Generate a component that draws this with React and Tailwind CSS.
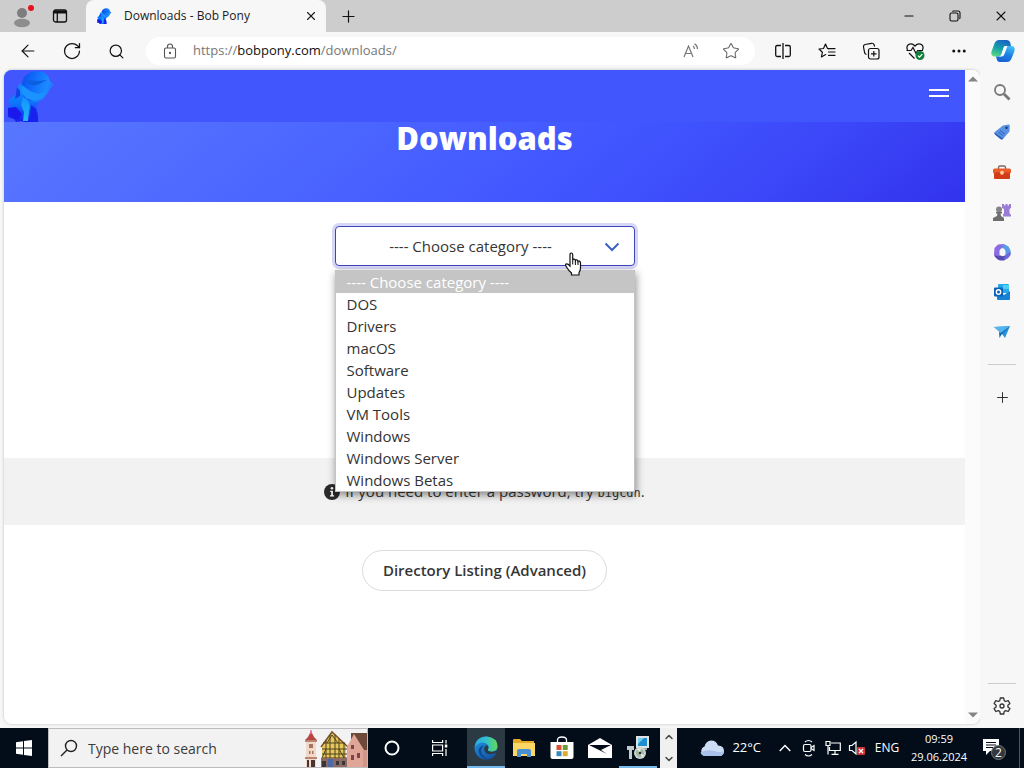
import React from "react";
import {
  ArrowLeft,
  RotateCw,
  Search,
  Star,
  X,
  Plus,
  Minus,
  ChevronDown,
  ChevronUp,
  Ellipsis,
} from "lucide-react";

const categories = [
  "DOS",
  "Drivers",
  "macOS",
  "Software",
  "Updates",
  "VM Tools",
  "Windows",
  "Windows Server",
  "Windows Betas",
];

const iconButton = "flex h-full items-center justify-center";

function DinoLogo({ className, id }) {
  return (
    <svg viewBox="0 0 52 52" className={className} aria-hidden="true">
      <defs>
        <linearGradient id={`${id}-head`} x1="0" y1="0.2" x2="1" y2="0.5">
          <stop offset="0" stopColor="#0a50f0" />
          <stop offset="0.45" stopColor="#1273fb" />
          <stop offset="0.8" stopColor="#1b8cff" />
          <stop offset="1" stopColor="#2b6cff" />
        </linearGradient>
        <linearGradient id={`${id}-body`} x1="0.4" y1="0" x2="0.5" y2="1">
          <stop offset="0" stopColor="#148cff" />
          <stop offset="0.5" stopColor="#0c76fb" />
          <stop offset="0.75" stopColor="#0f4cf6" />
          <stop offset="1" stopColor="#1a18ef" />
        </linearGradient>
        <linearGradient id={`${id}-leg`} x1="0" y1="0" x2="0" y2="1">
          <stop offset="0" stopColor="#1391ff" />
          <stop offset="1" stopColor="#24b8f2" />
        </linearGradient>
      </defs>
      <path
        d="M16 13l2 4 4-3 14 12-2 6-2 4 2 8v8H21l-4-1-5 1-2-3-7-2 4-4-4-5 4-3-3-5 6-4 3-5 1-4z"
        fill={`url(#${id}-body)`}
      />
      <path
        d="M18 13l2-6 5-4 6-2 8 1 5 4 2 5 4 4-4 4-3 5-4 5-6 3-7 1-6-5z"
        fill={`url(#${id}-head)`}
      />
      <path d="M18 15l-1 7 5 6 9 3 7-3 4-6-8 2-8-3z" fill="#1a92ff" />
      <path d="M21 10c3 5 8 7 14 4l8-4-10 1z" fill="#0b5fe0" />
      <path d="M19 27c6 3 8 8 6 14l-1 10h-5l1-9-3-7z" fill={`url(#${id}-leg)`} />
      <path d="M13 17l3 4v5l-5 3z" fill="#1440e6" />
      <path d="M4 38l8-1 6 7-4 6-4-1-6-3z" fill="#1b18ee" />
      <path d="M27 35l5 4 2 13h-8z" fill="#1a20f0" />
    </svg>
  );
}

function TitleBar() {
  return (
    <header className="flex h-8 items-stretch bg-[#cdcdcd]">
      <button aria-label="Profile" className="flex w-11 items-center justify-center">
        <svg viewBox="0 0 24 24" className="h-6 w-6">
          <circle cx="12" cy="9" r="5" fill="#7d7d7d" />
          <ellipse cx="12" cy="19" rx="8" ry="4.2" fill="#8d8d8d" />
          <circle cx="21" cy="4" r="3" fill="#e3121c" />
        </svg>
      </button>
      <button aria-label="Tab actions" className="flex w-8 items-center justify-center">
        <svg viewBox="0 0 16 16" className="h-4 w-4" fill="none" stroke="#111" strokeWidth="1.3">
          <rect x="1.5" y="2" width="13" height="12" rx="2" />
          <path d="M2 4h12" strokeWidth="3" />
          <path d="M5.3 5v9" />
        </svg>
      </button>
      <div className="ml-[10px] flex w-60 items-center rounded-t-lg bg-[#f7f7f7] px-2">
        <DinoLogo id="tab" className="h-4 w-5" />
        <span className="ml-[10px] flex-1 text-[12px] text-[#1b1b1b]">Downloads - Bob Pony</span>
        <button aria-label="Close tab">
          <X size={14} color="#222" strokeWidth={2} />
        </button>
      </div>
      <button aria-label="New tab" className="flex w-11 items-center justify-center">
        <Plus size={19} color="#111" strokeWidth={1.5} />
      </button>
      <div className="flex-1" />
      <button aria-label="Minimize" className="flex w-[46px] items-center justify-center">
        <Minus size={14} color="#111" strokeWidth={1.8} />
      </button>
      <button aria-label="Restore" className="flex w-[46px] items-center justify-center">
        <svg viewBox="0 0 12 12" className="h-3 w-3" fill="none" stroke="#111" strokeWidth="1.1">
          <rect x="1" y="3" width="8" height="8" rx="1.5" />
          <path d="M3.2 1.5Q3.5 1 4.5 1H9a2 2 0 0 1 2 2v4.500q0 1-.7 1.300" />
        </svg>
      </button>
      <button aria-label="Close" className="flex w-[46px] items-center justify-center">
        <X size={16} color="#111" strokeWidth={1.6} />
      </button>
    </header>
  );
}

function CopilotIcon() {
  return (
    <svg viewBox="0 0 24 24" className="h-6 w-6">
      <defs>
        <linearGradient id="cpA" x1="0.6" y1="0" x2="0.2" y2="1">
          <stop offset="0" stopColor="#1a63c4" />
          <stop offset="0.5" stopColor="#14a0a8" />
          <stop offset="1" stopColor="#5fd884" />
        </linearGradient>
        <linearGradient id="cpB" x1="0.7" y1="0" x2="0.3" y2="1">
          <stop offset="0" stopColor="#45bdf5" />
          <stop offset="0.5" stopColor="#1c80e4" />
          <stop offset="1" stopColor="#1660d2" />
        </linearGradient>
      </defs>
      <path d="M8 1h8q2.500 0 3.200 2.500L20 7h-5q-2 0-2.600 2l-2 6.500q-.7 2-2.700 2H3.500Q-.5 17 .5 12.500L3.500 4.500Q4.800 1 8 1z" fill="url(#cpA)" />
      <path d="M16 23H9q-2.500 0-3.200-2.500L5 17.500h4q2 0 2.600-2l2-6.500q.7-2 2.700-2h4.200q4 .5 3 5L20.500 19.500Q19.200 23 16 23z" fill="url(#cpB)" />
      <path d="M13.800 7h2.700L13.500 15q-.8 2.500-3 2.500H8q2-.2 2.600-2.200l1.700-5.800q.5-2 1.500-2.500z" fill="#f4fbff" />
    </svg>
  );
}

function Toolbar() {
  return (
    <nav className="flex h-[38px] items-center bg-[#f7f7f7] pl-[6px]">
      <button aria-label="Back" className={`${iconButton} w-11`}>
        <ArrowLeft size={20} color="#111" strokeWidth={1.4} />
      </button>
      <button aria-label="Refresh" className={`${iconButton} w-11`}>
        <RotateCw size={20} color="#111" strokeWidth={1.5} />
      </button>
      <button aria-label="Search" className={`${iconButton} w-11`}>
        <Search size={17} color="#111" strokeWidth={1.7} />
      </button>
      <div className="ml-2 mr-[6px] flex h-7 flex-1 items-center rounded-full bg-white pl-[17px] pr-[15px]">
        <svg viewBox="0 0 14 16" className="h-4 w-[14px]" fill="none" stroke="#555" strokeWidth="1.1">
          <rect x="1.500" y="5" width="11" height="10" rx="1.500" />
          <path d="M4.500 5V3.500a2.500 2.500 0 0 1 5 0V5" />
          <circle cx="7" cy="10" r=".6" fill="#555" />
        </svg>
        <div className="ml-4 flex-1 text-[13px] text-[#777]">
          https://<span className="text-[#111]">bobpony.com</span>/downloads/
        </div>
        <button aria-label="Read aloud" className="w-10">
          <svg viewBox="0 0 18 18" className="h-[18px] w-[18px]" fill="none" stroke="#777" strokeWidth="1.200">
            <path d="M2 15 6.500 4 11 15M3.500 11.500h6M11 4q1.500 1 1.500 3M12.500 1.800Q15.500 3.500 15.500 7" />
          </svg>
        </button>
        <button aria-label="Favorite this page">
          <Star size={18} color="#666" strokeWidth={1.4} />
        </button>
      </div>
      <button aria-label="Split screen" className={`${iconButton} w-11`}>
        <svg viewBox="0 0 18 18" className="h-[18px] w-[18px]" fill="none" stroke="#111" strokeWidth="1.300">
          <path d="M9 1v16M7 3.500H3.200Q1.700 3.500 1.700 5v8q0 1.500 1.500 1.500H7M11 3.500h3.800q1.500 0 1.500 1.500v8q0 1.500-1.500 1.500H11" />
        </svg>
      </button>
      <button aria-label="Favorites" className={`${iconButton} w-11`}>
        <svg viewBox="0 0 18 18" className="h-[18px] w-[18px]" fill="none" stroke="#111" strokeWidth="1.200" strokeLinejoin="round" strokeLinecap="round">
          <path d="M10.500 7 12 6.500H9.500L7.500 2 5.500 6.500 1 7l3.400 3.200L3.400 15l4.300-2.400M11.500 6.700H17M10.500 10H17M10.500 13.300H17" />
        </svg>
      </button>
      <button aria-label="Collections" className={`${iconButton} w-11`}>
        <svg viewBox="0 0 18 18" className="h-[18px] w-[18px]" fill="none" stroke="#111" strokeWidth="1.200">
          <rect x="6.500" y="6.500" width="10.500" height="10.500" rx="2" />
          <path d="M11.800 9v5.500M9 11.800h5.500M4.500 12.500Q3 12 2.700 11L1.500 5Q1.200 3 3 2.500L9.500 1.300Q11.500 1 12.200 3l.4 1.500" />
        </svg>
      </button>
      <button aria-label="Browser essentials" className={`${iconButton} w-11`}>
        <svg viewBox="0 0 20 18" className="h-[18px] w-5" fill="none" stroke="#111" strokeWidth="1.200">
          <path d="M2.500 8Q1 4.500 3.500 2.500 7 .500 10 4q3-3.500 6.500-1.500Q19 4.500 17.500 8M1.500 8.500H6L8 5.500l3 6 1.600-3H18M4 11l5.500 5.500" />
          <circle cx="15" cy="13.500" r="4.500" fill="#11803c" stroke="none" />
          <path d="M13 13.600l1.500 1.500 2.800-3" stroke="#fff" />
        </svg>
      </button>
      <button aria-label="Settings and more" className={`${iconButton} w-11`}>
        <Ellipsis size={18} color="#111" strokeWidth={2} />
      </button>
      <button aria-label="Copilot" className={`${iconButton} w-[43px]`}>
        <CopilotIcon />
      </button>
    </nav>
  );
}

function HandCursor() {
  return (
    <svg viewBox="0 0 18 24" className="absolute left-[229px] top-[26px] z-20 h-6 w-[18px]" aria-hidden="true">
      <path
        d="M6 14V2.800Q6 1 7.300 1t1.400 1.800V8q.3-.9 1.400-.8 1.200.1 1.300 1.300.4-.8 1.400-.6 1.100.2 1.200 1.500.3-.6 1.300-.3 1.200.4 1.200 1.800V16q0 2.500-1.500 4.500V23H7.500v-2Q4.500 18.500 2.500 15 1 12.700 2 12q1.500-.8 4 2z"
        fill="#fff"
        stroke="#111"
        strokeWidth="1.200"
      />
      <path d="M8.700 8v4.500M11.400 8.500V13M14 9.500V13" stroke="#111" strokeWidth="1" />
    </svg>
  );
}

function CategoryPicker() {
  return (
    <div className="relative w-[300px]">
      <select
        aria-label="Category"
        defaultValue=""
        className="h-10 w-full appearance-none rounded-[4px] border border-[#3d45b8] bg-white pl-3 pr-10 text-center text-[15px] text-[#363636] shadow-[0_0_0_3px_#d6d7f8] outline-none"
      >
        <option value="">---- Choose category ----</option>
        {categories.map((name) => (
          <option key={name}>{name}</option>
        ))}
      </select>
      <svg viewBox="0 0 16 10" className="pointer-events-none absolute right-[15px] top-4 h-[10px] w-4" fill="none" stroke="#3a62c4" strokeWidth="2">
        <path d="M1.500 1.500 8 8l6.500-6.500" />
      </svg>
      <ul
        role="listbox"
        aria-label="Categories"
        className="absolute left-0 right-0 top-full z-10 mt-1 border border-[#c4c4c4] bg-white text-[15px] leading-[22px] text-[#333] shadow-[1px_3px_8px_rgba(0,0,0,0.45)]"
      >
        <li role="option" aria-selected="true" className="bg-[#c5c5c5] px-[11px] text-white">
          ---- Choose category ----
        </li>
        {categories.map((name) => (
          <li key={name} role="option" aria-selected="false" className="px-[11px]">
            {name}
          </li>
        ))}
      </ul>
      <HandCursor />
    </div>
  );
}

function Page() {
  return (
    <main className="min-w-0 flex-1 bg-white">
      <section className="h-[132px] bg-[linear-gradient(141deg,#5a7aff_0%,#4c67ff_35%,#4156ff_62%,#3b46f8_82%,#3233ec_100%)]">
        <div className="flex h-[52px] justify-between bg-[#4157fd]">
          <a href="#home" aria-label="Bob Pony">
            <DinoLogo id="nav" className="h-[52px] w-[52px]" />
          </a>
          <button aria-label="Menu" className="mr-4 flex h-[46px] w-5 flex-col justify-center gap-1">
            <span className="h-[2px] w-full bg-white" />
            <span className="h-[2px] w-full bg-white" />
          </button>
        </div>
        <h1 className="text-center text-[31px] font-extrabold leading-8 text-white">Downloads</h1>
      </section>
      <div className="flex justify-center pt-6 pb-48">
        <CategoryPicker />
      </div>
      <div className="flex h-[67px] items-center justify-center gap-[5px] bg-[#f2f2f2] text-[15px] text-[#363636]">
        <svg viewBox="0 0 16 16" className="h-4 w-4">
          <circle cx="8" cy="8" r="8" fill="#2b2b2b" />
          <circle cx="8" cy="4.300" r="1.300" fill="#fff" />
          <path d="M6.200 6.800h2.700v4.400h1.200v1.300H6v-1.300h1.200V8.100h-1z" fill="#fff" />
        </svg>
        <p>
          If you need to enter a password, try{" "}
          <code className="font-['DejaVu_Sans_Mono',monospace] text-[12px]">bigcdn</code>.
        </p>
      </div>
      <div className="flex justify-center pt-[25px]">
        <a href="#listing" className="flex h-[41px] items-center rounded-full border border-[#dbdbdb] px-5 text-[15px] font-semibold text-[#363636]">
          Directory Listing (Advanced)
        </a>
      </div>
    </main>
  );
}

function Sidebar() {
  const item = "flex h-10 w-full items-center justify-center";
  return (
    <aside className="-mb-1 flex w-11 flex-col items-center bg-[#f7f7f7] pt-[2px]">
      <button aria-label="Search sidebar" className={item}>
        <svg viewBox="0 0 18 18" className="h-[18px] w-[18px]" fill="none" stroke="#777">
          <circle cx="7" cy="7" r="5" strokeWidth="1.800" />
          <path d="M11 11l5.500 5.500" strokeWidth="2.800" />
        </svg>
      </button>
      <button aria-label="Shopping" className={item}>
        <svg viewBox="0 0 18 18" className="h-[18px] w-[18px]">
          <path d="M10 2.500l5.500-1q1.300 0 1.300 1.300L16.500 8.500l-6.500 7.500q-1.200 1.200-2.500 0L2 11.500Q.8 10 2 8.800z" fill="#5b92e4" />
          <path d="M1.500 9.500 8.800 14.500l1.500 1q-1.500 1.700-2.800.5L2 11.500q-.9-1-.5-2z" fill="#2c62b8" />
          <path d="M7 7.500 12 11M5.500 9.200l4.800 3.500" stroke="#2c62b8" />
          <circle cx="13.500" cy="4.800" r="1.300" fill="#20406f" />
        </svg>
      </button>
      <button aria-label="Tools" className={item}>
        <svg viewBox="0 0 18 18" className="h-[18px] w-[18px]">
          <path d="M5.500 6V4.500q0-1.500 1.500-1.500h4q1.500 0 1.500 1.500V6" fill="none" stroke="#7d6a68" strokeWidth="1.400" />
          <rect x="0" y="5.500" width="18" height="5" rx="1.500" fill="#ea5b2a" />
          <rect x="1" y="9.500" width="16" height="6.500" rx="1" fill="#d23c16" />
          <circle cx="9" cy="9.800" r="2" fill="#ffc9a8" />
        </svg>
      </button>
      <button aria-label="Games" className={item}>
        <svg viewBox="0 0 20 20" className="h-5 w-5">
          <path d="M10 2h2v1.500h1.500V2h2v1.500H17V2h2v4l-1.500 1v4l1.500 2v1.500h-8V13l1-2V7l-2-1z" fill="#9a7bd6" />
          <circle cx="7" cy="7.500" r="3" fill="#858585" />
          <path d="M4 10h6v1.500H8.500L9 14l3 2v3H1v-3l4-2 .500-2.500H4z" fill="#6d6d6d" />
        </svg>
      </button>
      <button aria-label="Microsoft 365" className={item}>
        <svg viewBox="0 0 18 18" className="h-[18px] w-[18px]">
          <path d="M11 1 5 1.500 1.500 5 1 11.500 4 14l2.500-2V7.500L8 5.500l3-1.500z" fill="#8a6be4" />
          <path d="M1 11.500Q2 15.500 7 17.500h4l4-2.500-2-3-3 1.200-3.500-1L4 13z" fill="#5a49b4" />
          <path d="M11 1l4.500 2.500 2 4V12L15 15l-4 1.500 1.500-4V8L11 5.500 8 5z" fill="#5a9ae8" />
          <path d="M15 15l2.500-3V8.500l-4.800 3.200-1.700 4.800z" fill="#7466d8" />
        </svg>
      </button>
      <button aria-label="Outlook" className={item}>
        <svg viewBox="0 0 18 18" className="h-[18px] w-[18px]">
          <rect x="5" y="1" width="11" height="9" rx="1" fill="#28a8ea" />
          <rect x="10" y="2" width="6" height="4" fill="#50d0f5" />
          <path d="M4 8l7 4 6-4v8q0 1-1 1H5q-1 0-1-1z" fill="#1681d5" />
          <rect x="1" y="4.500" width="9" height="9" rx="1" fill="#0a62b8" />
          <circle cx="5.500" cy="9" r="2.200" fill="none" stroke="#fff" strokeWidth="1.400" />
        </svg>
      </button>
      <button aria-label="Drop" className={item}>
        <svg viewBox="0 0 18 18" className="h-[18px] w-[18px]">
          <path d="M1 4l16-1-5 12-3-4z" fill="#2793de" />
          <path d="M1 4l16-1L8 10z" fill="#55b5ee" />
          <path d="M8 10l9-7-8.500 8.500L6.500 15 6 9z" fill="#1463ad" />
        </svg>
      </button>
      <div className="mt-3 h-px w-7 bg-[#cccccc]" />
      <button aria-label="Customize" className="mt-3 flex h-10 w-full items-center justify-center">
        <Plus size={17} color="#222" strokeWidth={1.300} />
      </button>
      <div className="flex-1" />
      <div className="h-px w-7 bg-[#cccccc]" />
      <button aria-label="Settings" className="flex h-11 w-full items-center justify-center">
        <svg viewBox="0 0 20 20" className="h-5 w-5" fill="none" stroke="#333" strokeWidth="1.300" strokeLinejoin="round">
          <path d="M8.300 2h3.400l.5 2.600 1.500.9 2.500-.9 1.700 2.900-2 1.700v1.700l2 1.700-1.700 2.900-2.500-.9-1.500.9-.5 2.500H8.300l-.5-2.500-1.500-.9-2.500.9-1.700-2.900 2-1.700V9.200l-2-1.700 1.700-2.900 2.500.9 1.500-.9z" />
          <circle cx="10" cy="10" r="2" />
        </svg>
      </button>
    </aside>
  );
}

function Scrollbar() {
  return (
    <div className="flex w-[15px] flex-col items-center justify-between bg-[#fbfbfb] py-[6px]" aria-hidden="true">
      <svg viewBox="0 0 10 6" className="h-[6px] w-[10px]">
        <path d="M0 5.500 5 .5l5 5z" fill="#858585" />
      </svg>
      <svg viewBox="0 0 10 6" className="h-[6px] w-[10px]">
        <path d="M0 .5h10l-5 5z" fill="#858585" />
      </svg>
    </div>
  );
}

function SearchArt() {
  return (
    <svg viewBox="0 0 64 38" className="h-[38px] w-16" aria-hidden="true">
      <path d="M2 11 5 8l3-6 3 6 3 3z" fill="#b8453f" />
      <path d="M7.300 1h1.400v4H7.300z" fill="#ee6aa0" />
      <rect x="3" y="11" width="10" height="27" fill="#f0d9c8" />
      <path d="M2 11h12v2H2zM2 28h12v2H2z" fill="#b98471" />
      <path d="M6 15h4v4H6zM6 22h1.500v3H6zM9 22h1.500v3H9z" fill="#a87462" />
      <path d="M4 38v-7h2v7zM8 38v-7h4v7z" fill="#4b3430" />
      <path d="M19 16 29 3l14 12v23H19z" fill="#e6c75c" />
      <path d="M18 18 29 3l16 15" fill="none" stroke="#7c552f" strokeWidth="1.500" />
      <path d="M20 14h22M19 20h26M19 25h26M19 29h26M23 11v18M27 6v23M32 6v23M36 10v19M41 14v15M19 29l4-9M36 20l5 9M24 14l5-8 6 8" fill="none" stroke="#4f411f" strokeWidth="1" />
      <path d="M18 29h28v9H18z" fill="#8d6b62" />
      <path d="M25 38v-8h5v8z" fill="#4a6aa8" />
      <path d="M19 32h4v6h-4zM33 32h3v4h-3zM39 32h3v4h-3z" fill="#3a3536" />
      <path d="M48 4h16v34H48z" fill="#6d493c" />
      <path d="M44 18 51 5l12 19v14H44z" fill="#dfa596" />
      <path d="M60 21h4v17h-4z" fill="#cf968a" />
      <path d="M48 16h3v4h-3zM54 24h3v5h-3zM48 26h3v5h-3z" fill="#7d454a" />
    </svg>
  );
}

function EdgeIcon() {
  return (
    <svg viewBox="0 0 24 24" className="h-6 w-6">
      <defs>
        <linearGradient id="edgeTop" x1="0" y1="0.5" x2="1" y2="0.5">
          <stop offset="0" stopColor="#2aa9e8" />
          <stop offset="0.5" stopColor="#32c1cb" />
          <stop offset="1" stopColor="#62d757" />
        </linearGradient>
        <linearGradient id="edgeLow" x1="0" y1="0" x2="0.6" y2="1">
          <stop offset="0" stopColor="#2499e5" />
          <stop offset="1" stopColor="#1457a8" />
        </linearGradient>
      </defs>
      <circle cx="12" cy="12" r="11.500" fill="url(#edgeLow)" />
      <path d="M.7 11Q2 .5 12.300.5 23.500 1.500 23.500 10.500q-.5 5-6 5.200-4.500-.2-3.500-2.500 1.600-2-.5-4.700Q7 3.500.7 11z" fill="url(#edgeTop)" />
      <path d="M9.500 9.500Q5 15 9.500 20q3.500 3.500 8 2.500-8.500 2.200-12-4.500-3-6.500 4-8.500z" fill="#0d4b94" />
      <path d="M12.700 9.300q-3.500 1.500-2.200 5.600 2.800 5 9.700 2.500l2.300-.2.800-3.200q-3 2.500-7.300 1.500-3-.8-2-2.500 1.200-2-1.300-3.700z" fill="#2c3a44" />
    </svg>
  );
}

function Taskbar() {
  const tray = "flex h-full w-6 items-center justify-center";
  const app = "flex h-full w-[38px] items-center justify-center border-y-2 border-t-transparent";
  return (
    <footer className="flex h-10 items-stretch bg-[#020d19] text-white">
      <button aria-label="Start" className="flex w-12 items-center justify-center">
        <svg viewBox="0 0 16 16" className="h-4 w-4" fill="#fff">
          <path d="M0 2.200 7 1.200v6.300H0zM8 1 16 0v7.500H8zM0 8.500h7v6.300l-7-1zM8 8.500h8V16l-8-1.100z" />
        </svg>
      </button>
      <label className="flex w-80 items-center border border-[#bcbcbc] bg-[#f2f2f2] pl-[11px]">
        <svg viewBox="0 0 18 18" className="h-[18px] w-[18px]" fill="none" stroke="#222" strokeWidth="1.400">
          <circle cx="11" cy="7" r="5.500" />
          <path d="M7 11 1 17" />
        </svg>
        <input
          type="text"
          aria-label="Type here to search"
          placeholder="Type here to search"
          className="ml-[10px] min-w-0 flex-1 bg-transparent text-[14px] text-[#333] outline-none placeholder:text-[#3c3c3c]"
        />
        <SearchArt />
      </label>
      <button aria-label="Cortana" className="flex w-12 items-center justify-center">
        <svg viewBox="0 0 16 16" className="h-4 w-4">
          <circle cx="8" cy="8" r="6.500" fill="none" stroke="#fff" strokeWidth="2" />
        </svg>
      </button>
      <button aria-label="Task view" className="flex w-12 items-center justify-center">
        <svg viewBox="0 0 16 16" className="h-4 w-4" fill="none" stroke="#fff" strokeWidth="1.200">
          <path d="M.6 0v2.500h10V0M.6 16v-2.500h10V16M.6 5h10v6H.6zM14 0v3.500M14 9v7" />
          <path d="M12.800 4.500h2.500v3h-2.500z" fill="#fff" stroke="none" />
        </svg>
      </button>
      <div className="ml-[3px] flex">
        <button aria-label="Microsoft Edge" className={`${app} border-b-[#76b9ed] bg-[#2c3a44]`}>
          <EdgeIcon />
        </button>
        <button aria-label="File Explorer" className={`${app} border-b-transparent`}>
          <svg viewBox="0 0 24 20" className="h-5 w-6">
            <path d="M1 2q0-1 1-1h6l2 2h12v15H1z" fill="#e6a829" />
            <path d="M1 5h22v13H1z" fill="#fbd665" />
            <path d="M5 19v-6q0-2 2-2h10q2 0 2 2v6h-4v-3H9v3z" fill="#4a8fd2" />
          </svg>
        </button>
        <button aria-label="Microsoft Store" className={`${app} border-b-transparent`}>
          <svg viewBox="0 0 24 24" className="h-6 w-6">
            <path d="M7.500 6V4q0-3 4.500-3t4.500 3v2" fill="none" stroke="#fff" strokeWidth="1.300" />
            <path d="M.5 6h23v15q0 2-2 2h-19q-2 0-2-2z" fill="#fff" />
            <path d="M6.500 9h5v5h-5z" fill="#d55236" />
            <path d="M12.700 9h5v5h-5z" fill="#6b9b35" />
            <path d="M6.500 15.200h5v5h-5z" fill="#3588bd" />
            <path d="M12.700 15.200h5v5h-5z" fill="#dfa830" />
          </svg>
        </button>
        <button aria-label="Mail" className={`${app} border-b-transparent`}>
          <svg viewBox="0 0 24 20" className="h-5 w-6">
            <path d="M0 7 12 0l12 7v13H0z" fill="#fff" />
            <path d="M1 7h22l-10 5 6 4L1 7z" fill="#020d19" />
          </svg>
        </button>
        <button aria-label="Installer" className={`${app} border-b-[#76b9ed]`}>
          <svg viewBox="0 0 24 24" className="h-6 w-6">
            <path d="M10 0h13v12H10z" fill="#dfe3e6" />
            <path d="M12 2h9v8h-9z" fill="#1e8ed0" />
            <path d="M12 2h6l-6 6z" fill="#74cef2" />
            <path d="M15 12h6v2h-6z" fill="#9ca5ab" />
            <path d="M1 10h7v4H6v9H3v-9H1z" fill="#c4cbcf" />
            <circle cx="14" cy="17" r="6" fill="#cdd4d0" />
            <circle cx="14" cy="17" r="4.200" fill="#a5b8a3" />
            <path d="M14 17l-3-4 4-1zM14 17l4 2-2 3z" fill="#dfe9dc" />
            <circle cx="14" cy="17" r="1.300" fill="#263238" />
          </svg>
        </button>
      </div>
      <div className="ml-[3px] flex w-[17px] flex-col items-center justify-between bg-[#f0f0f0] py-[3px]">
        <ChevronUp size={12} color="#444" strokeWidth={3} />
        <ChevronDown size={12} color="#444" strokeWidth={3} />
      </div>
      <div className="flex-1" />
      <button className="flex items-center gap-2 pr-3 text-[13px]">
        <svg viewBox="0 0 24 16" className="h-4 w-6">
          <path d="M5 16a5 5 0 0 1-.5-9.500Q6 1 11 .5q5-.2 7 5 6 .3 6 5.500 0 5-5 5z" fill="#cddcf5" />
          <path d="M5 16a5 5 0 0 1-4.500-3.500Q8 9 14 11t10 0q0 5-5 5z" fill="#a9c1ea" />
        </svg>
        <span>22°C</span>
      </button>
      <button aria-label="Show hidden icons" className={tray}>
        <svg viewBox="0 0 12 8" className="h-2 w-3" fill="none" stroke="#fff" strokeWidth="1.400">
          <path d="M.7 7 6 1.500 11.300 7" />
        </svg>
      </button>
      <button aria-label="Meet now" className={tray}>
        <svg viewBox="0 0 14 18" className="h-[18px] w-[14px]" fill="none" stroke="#fff" strokeWidth="1.200">
          <rect x="1.500" y="5.500" width="7.500" height="7" rx="1.500" />
          <path d="M9 8.500l3-2v5l-3-2M3 3q3.500-3 7 0M3 15.500q3.500 3 7 0" />
        </svg>
      </button>
      <button aria-label="Network" className={tray}>
        <svg viewBox="0 0 16 16" className="h-4 w-4" fill="none" stroke="#fff" strokeWidth="1.200">
          <path d="M6 3h9.300v7.500H4.500V7M10 10.500V14M6.500 14.300h7M1 1.500h4v4H1zM3 5.500v9" />
        </svg>
      </button>
      <button aria-label="Volume muted" className={tray}>
        <svg viewBox="0 0 18 16" className="h-4 w-[18px]" fill="none">
          <path d="M1.500 5.500H4L8 2v12l-4-3.500H1.500z" stroke="#fff" strokeWidth="1.200" />
          <rect x="9" y="7" width="8" height="8" rx="1" fill="#d13438" />
          <path d="M11 9l4 4M15 9l-4 4" stroke="#fff" strokeWidth="1.300" />
        </svg>
      </button>
      <button className="w-9 text-center text-[12px]">ENG</button>
      <button className="w-[68px] text-center text-[11px] leading-[18px]">
        <span className="block">09:59</span>
        <span className="block">29.06.2024</span>
      </button>
      <button aria-label="2 notifications" className="flex w-[46px] items-center justify-center pr-1">
        <svg viewBox="0 0 24 24" className="h-6 w-6">
          <path d="M1 3h16v12H8l-4 4v-4H1z" fill="#fff" />
          <path d="M4 6.500h10M4 9h10M4 11.500h7" stroke="#020d19" />
          <circle cx="16.500" cy="16.500" r="7" fill="#33383e" stroke="#777" />
          <text x="16.500" y="21" textAnchor="middle" fontSize="12" fill="#fff">
            2
          </text>
        </svg>
      </button>
      <div className="w-[5px] border-l border-[#4b5560]" />
    </footer>
  );
}

export default function App() {
  return (
    <div className="flex min-h-screen flex-col bg-[#f7f7f7] font-['Open_Sans','Noto_Sans',sans-serif]">
      <TitleBar />
      <Toolbar />
      <div className="flex flex-1 pb-1 pl-1">
        <div className="flex min-w-0 flex-1 overflow-hidden rounded-lg shadow-[0_0_3px_rgba(0,0,0,0.25)]">
          <Page />
          <Scrollbar />
        </div>
        <Sidebar />
      </div>
      <Taskbar />
    </div>
  );
}
